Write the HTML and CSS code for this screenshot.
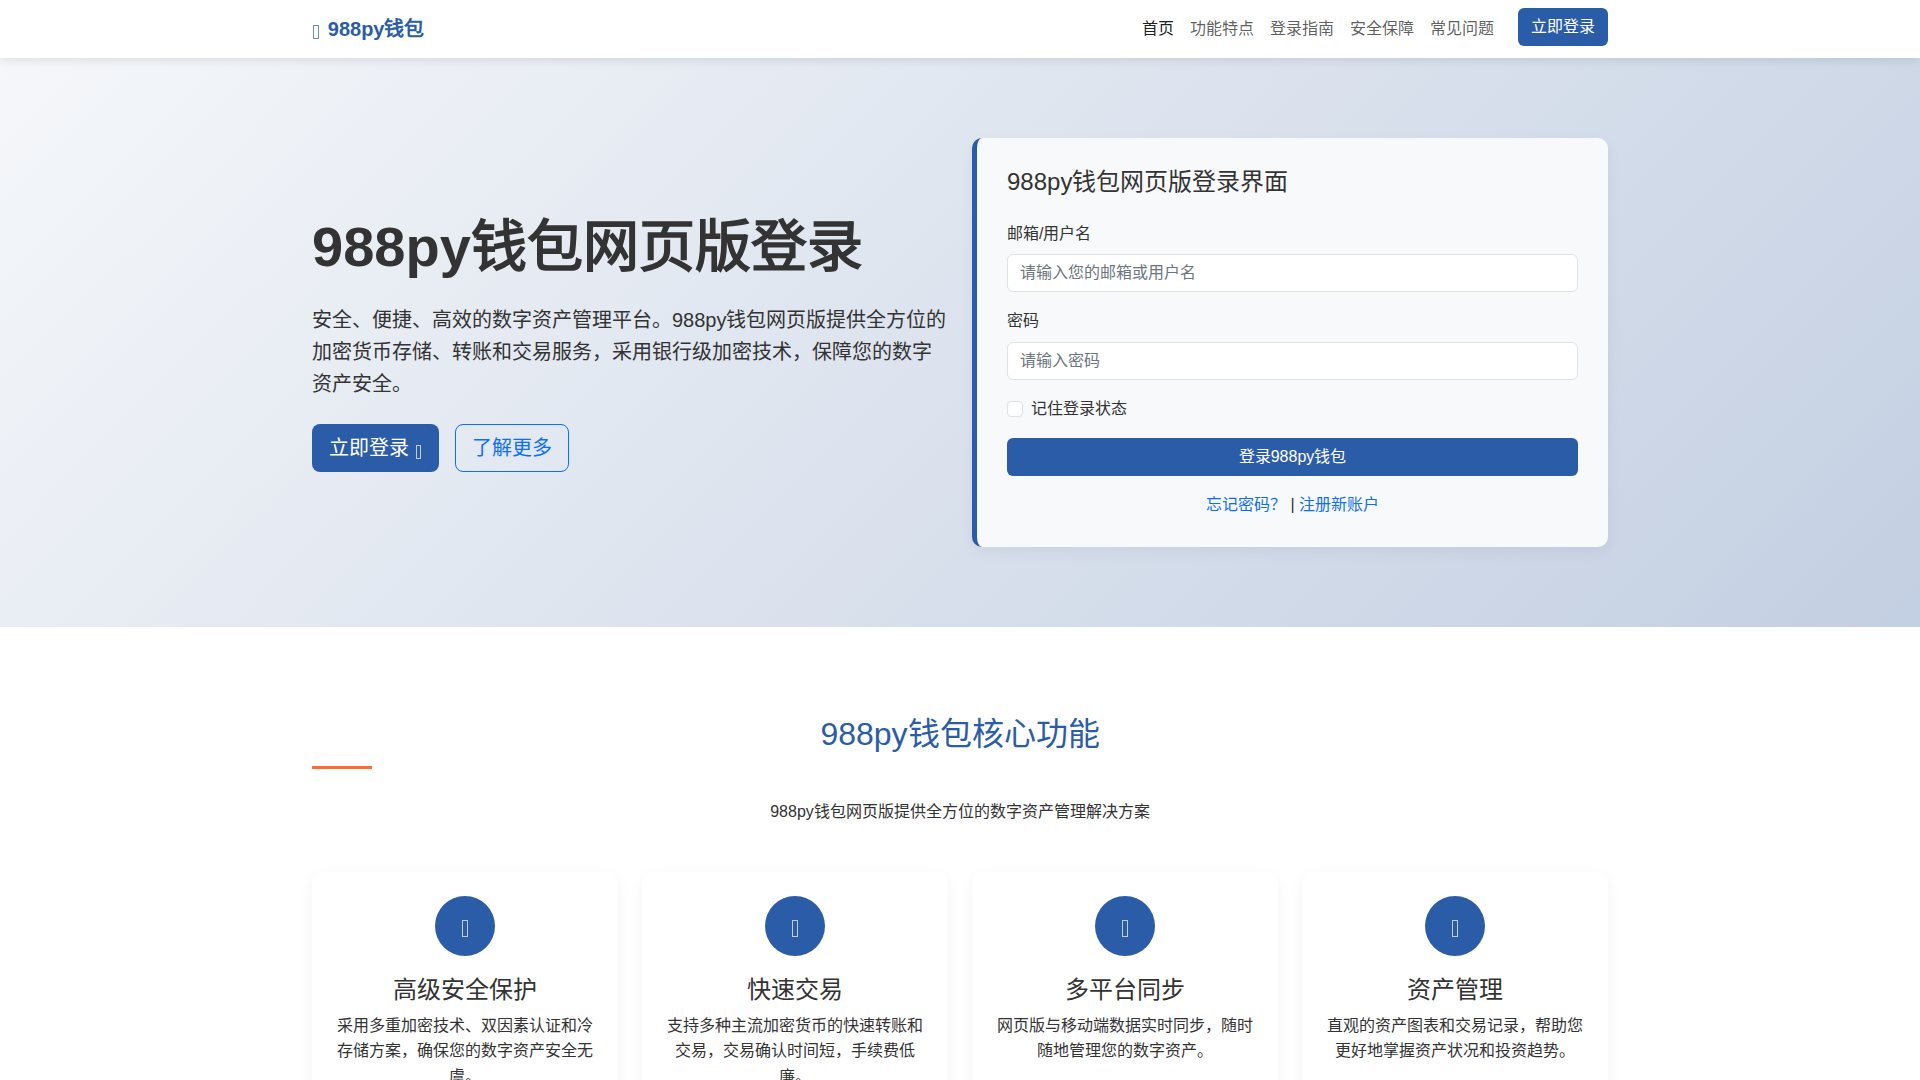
FILE: index.html
```html
<!DOCTYPE html>
<html lang="zh-CN">
<head>
<meta charset="utf-8">
<title>988py钱包网页版登录</title>
<link rel="stylesheet" href="styles.css">
</head>
<body>
<nav class="navbar">
  <div class="container nav-inner">
    <a class="brand" href="#"><i class="ico brand-ico"></i>988py钱包</a>
    <ul class="nav-list">
      <li><a class="nav-link active" href="#">首页</a></li>
      <li><a class="nav-link" href="#">功能特点</a></li>
      <li><a class="nav-link" href="#">登录指南</a></li>
      <li><a class="nav-link" href="#">安全保障</a></li>
      <li><a class="nav-link" href="#">常见问题</a></li>
      <li><a class="btn btn-nav" href="#">立即登录</a></li>
    </ul>
  </div>
</nav>
<section class="hero">
  <div class="container hero-grid">
    <div class="hero-text">
      <h1>988py钱包网页版登录</h1>
      <p class="lead">安全、便捷、高效的数字资产管理平台。988py钱包网页版提供全方位的加密货币存储、转账和交易服务，采用银行级加密技术，保障您的数字资产安全。</p>
      <div class="hero-btns">
        <a class="btn btn-lg btn-primary" href="#">立即登录 <i class="ico"></i></a>
        <a class="btn btn-lg btn-outline" href="#">了解更多</a>
      </div>
    </div>
    <div class="login-card">
      <h2 class="login-title">988py钱包网页版登录界面</h2>
      <form>
        <div class="field">
          <label class="label" for="u">邮箱/用户名</label>
          <input class="input" id="u" type="text" placeholder="请输入您的邮箱或用户名">
        </div>
        <div class="field">
          <label class="label" for="p">密码</label>
          <input class="input" id="p" type="password" placeholder="请输入密码">
        </div>
        <div class="check">
          <input class="check-input" id="r" type="checkbox">
          <label for="r">记住登录状态</label>
        </div>
        <button class="btn btn-primary btn-block" type="button">登录988py钱包</button>
        <div class="login-links"><a href="#">忘记密码？</a> | <a href="#">注册新账户</a></div>
      </form>
    </div>
  </div>
</section>
<section class="features">
  <div class="container">
    <h2 class="section-title">988py钱包核心功能</h2>
    <p class="section-sub">988py钱包网页版提供全方位的数字资产管理解决方案</p>
    <div class="feature-grid">
      <div class="feature-card">
        <div class="feature-icon"><i class="ico"></i></div>
        <h3>高级安全保护</h3>
        <p>采用多重加密技术、双因素认证和冷存储方案，确保您的数字资产安全无虞。</p>
      </div>
      <div class="feature-card">
        <div class="feature-icon"><i class="ico"></i></div>
        <h3>快速交易</h3>
        <p>支持多种主流加密货币的快速转账和交易，交易确认时间短，手续费低廉。</p>
      </div>
      <div class="feature-card">
        <div class="feature-icon"><i class="ico"></i></div>
        <h3>多平台同步</h3>
        <p>网页版与移动端数据实时同步，随时随地管理您的数字资产。</p>
      </div>
      <div class="feature-card">
        <div class="feature-icon"><i class="ico"></i></div>
        <h3>资产管理</h3>
        <p>直观的资产图表和交易记录，帮助您更好地掌握资产状况和投资趋势。</p>
      </div>
    </div>
  </div>
</section>
</body>
</html>
```
FILE: styles.css
```css
* { box-sizing: border-box; }
html, body { margin: 0; padding: 0; }
body {
  font-family: "Liberation Sans", sans-serif;
  font-size: 16px;
  line-height: 1.6;
  color: #333;
  background: #fff;
}
a { text-decoration: none; }
h1, h2, h3, p, ul { margin: 0; padding: 0; }
.ico { display: inline-block; width: .28em; height: .7em; margin: 0 .055em; border: 1px solid currentColor; opacity: .7; vertical-align: -.17em; }
.container { width: 1320px; margin: 0 auto; padding: 0 12px; }
.navbar { position: relative; z-index: 2; background: #fff; box-shadow: 0 2px 10px rgba(0,0,0,.1); padding: 8px 0; }
.nav-inner { display: flex; align-items: center; justify-content: space-between; }
.brand { padding: 5px 0; font-size: 20px; font-weight: 700; color: #2b5ca8; }
.brand-ico { margin-right: calc(.055em + 8px); }
.nav-list { display: flex; list-style: none; }
.nav-link { display: block; padding: 8px; color: rgba(0,0,0,.65); }
.nav-link.active { color: rgba(0,0,0,.9); }
.btn { display: inline-block; border-radius: 6px; border: 1px solid transparent; text-align: center; line-height: 1.5; }
.btn-nav { display: block; background: #2b5ca8; color: #fff; padding: 6px 12px; margin-left: 16px; }
.hero { background: linear-gradient(135deg, #f5f7fa 0%, #c3cfe2 100%); padding: 80px 0; }
.hero-grid { display: grid; grid-template-columns: 1fr 1fr; column-gap: 24px; align-items: center; }
.hero-text h1 { font-size: 56px; font-weight: 700; line-height: 1.2; margin-bottom: 24px; }
.lead { font-size: 20px; margin-bottom: 24px; }
.hero-btns { display: flex; gap: 16px; }
.btn-lg { font-size: 20px; padding: 8px 16px; border-radius: 8px; }
.btn-primary { background: #2b5ca8; color: #fff; }
.btn-outline { border-color: #0d6efd; color: #0d6efd; }
.login-card { background: #f8f9fa; border-left: 5px solid #2b5ca8; border-radius: 10px; padding: 30px; box-shadow: 0 5px 15px rgba(0,0,0,.05); }
.login-title { font-size: 24px; font-weight: 400; line-height: 1.2; margin-bottom: 24px; }
.field { margin-bottom: 16px; }
.label { display: block; margin-bottom: 8px; }
.input { display: block; width: 100%; padding: 6px 12px; font: inherit; line-height: 1.5; color: #212529; background: #fff; border: 1px solid #dee2e6; border-radius: 6px; height: 38px; }
.input::placeholder { color: #6c757d; }
.check { display: flex; align-items: center; gap: 8px; margin-bottom: 16px; }
.check-input { appearance: none; width: 16px; height: 16px; margin: 0; background: #fff; border: 1px solid #dee2e6; border-radius: 4px; }
.btn-block { display: block; width: 100%; padding: 6px 12px; font-family: inherit; font-size: 16px; line-height: 1.5; }
.login-links { text-align: center; margin-top: 16px; }
.login-links a { color: #0d6efd; }
.features { padding: 80px 0; }
.section-title { position: relative; padding-top: 2px; text-align: center; font-size: 32px; font-weight: 400; color: #2b5ca8; margin-bottom: 39px; }
.section-title::after { content: ""; position: absolute; left: 0; bottom: -9px; width: 60px; height: 3px; background: #ff6b35; }
.section-sub { text-align: center; margin-bottom: 47px; }
.feature-grid { display: grid; grid-template-columns: repeat(4, 1fr); gap: 24px; }
.feature-card { background: #fff; border-radius: 10px; padding: 24px; text-align: center; box-shadow: 0 5px 15px rgba(0,0,0,.05); }
.feature-icon { width: 60px; height: 60px; margin: 0 auto 20px; border-radius: 50%; background: #2b5ca8; color: #fff; font-size: 24px; display: flex; align-items: center; justify-content: center; }
.feature-icon .ico { margin-top: .2em; }
.feature-card h3 { font-size: 24px; font-weight: 400; line-height: 1.2; margin-bottom: 8px; }
```
